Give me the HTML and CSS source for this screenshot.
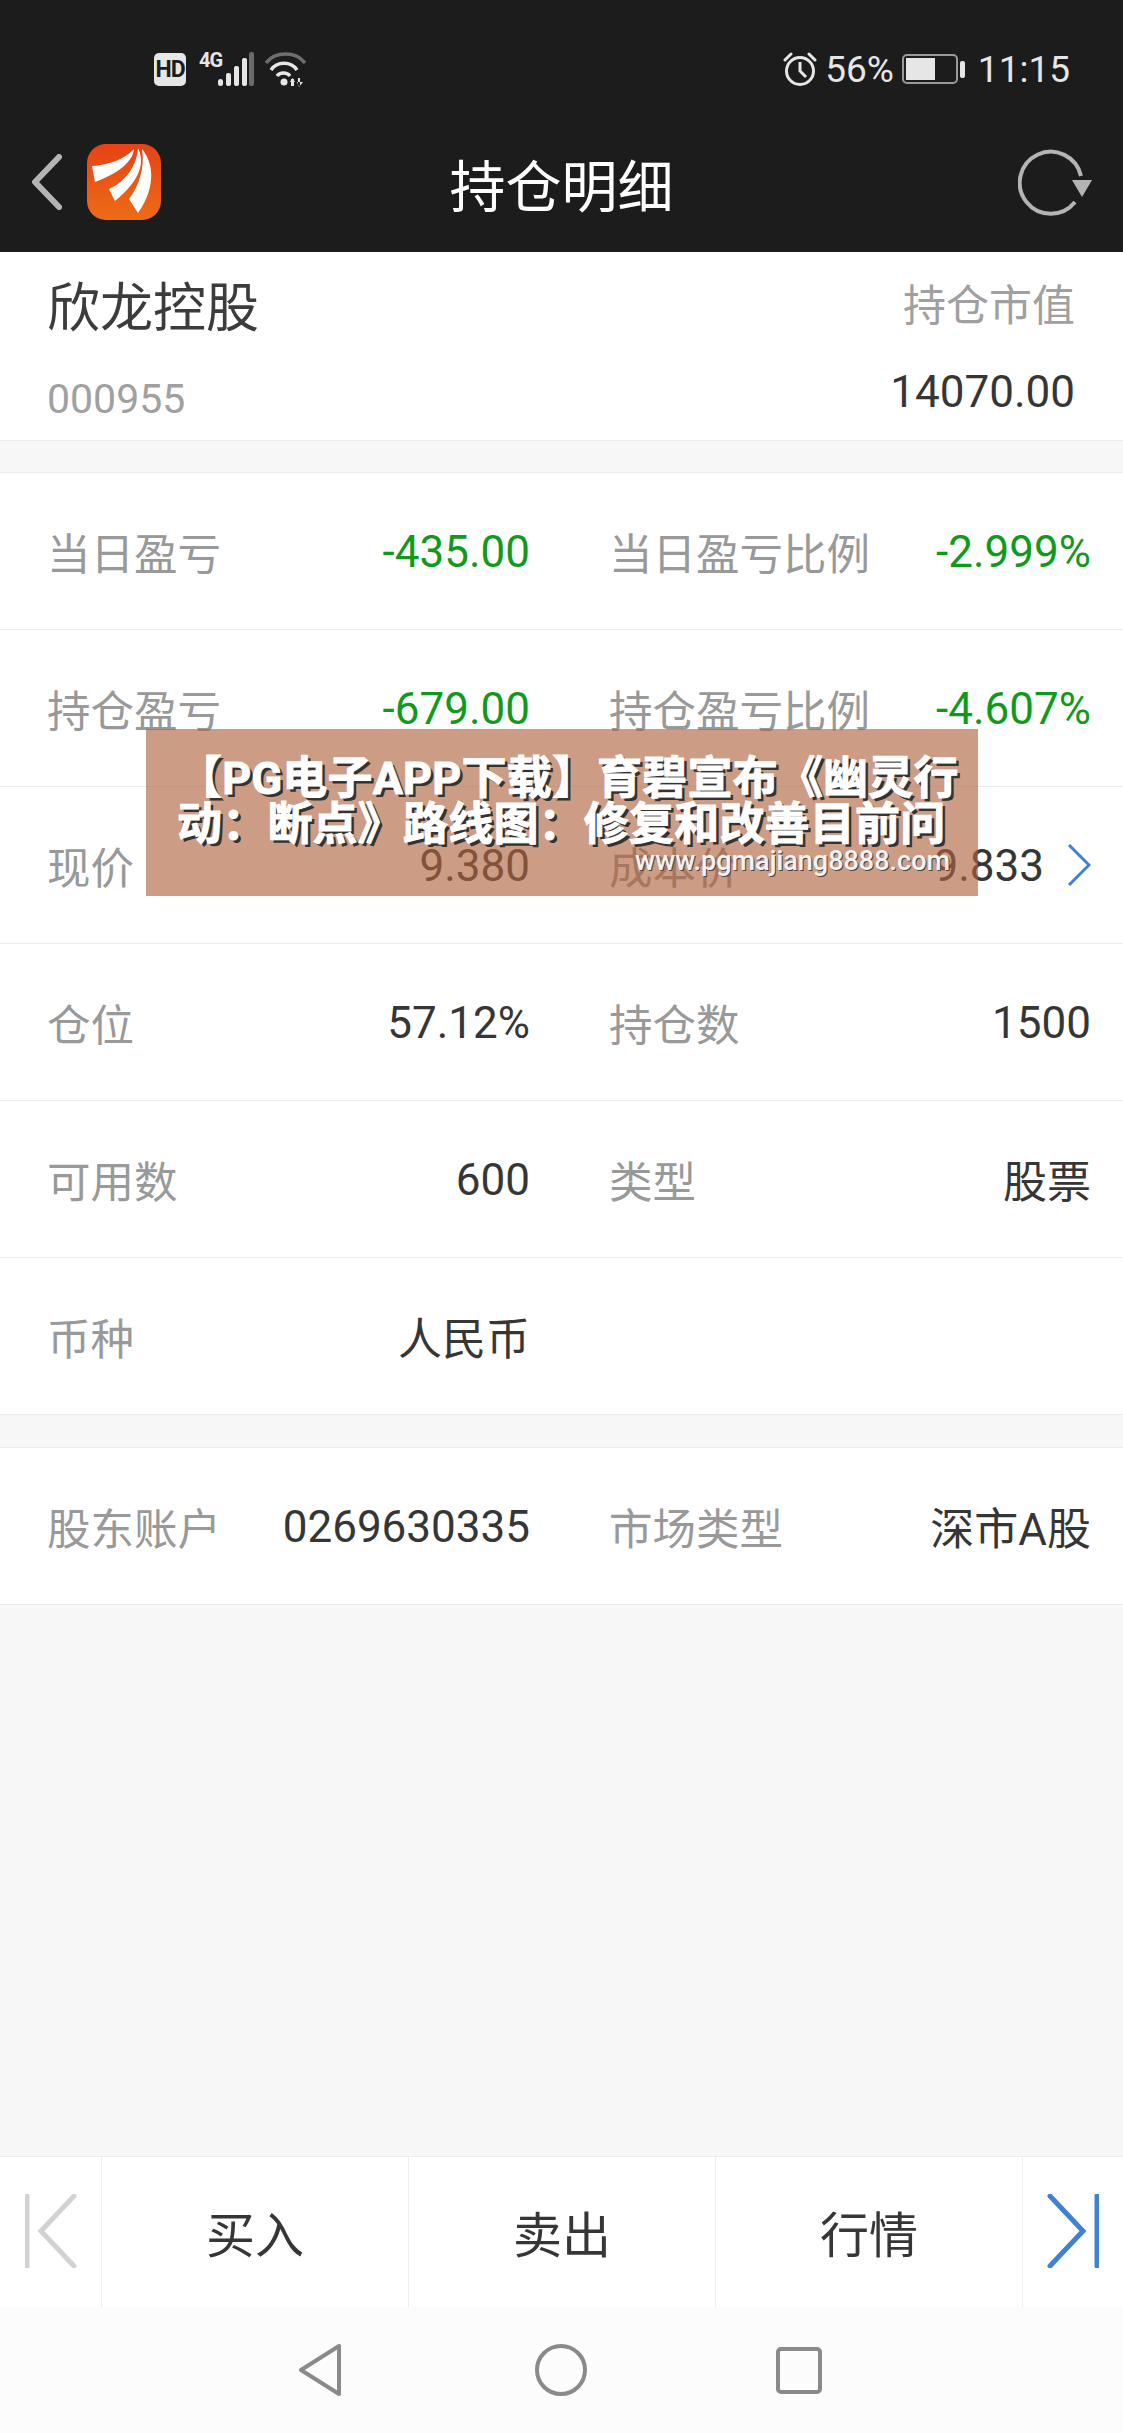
FILE: index.html
```html
<!DOCTYPE html>
<html lang="zh-CN">
<head>
    <meta charset="UTF-8">
    <meta name="viewport" content="width=device-width, initial-scale=1.0">
    <title>持仓明细</title>
    <link rel="stylesheet" href="styles.css">
</head>
<body>
<div class="page">
    <header class="top">
        <div class="status">
            <div class="status-left">
                <span class="hd">HD</span>
                <span class="net">4G</span>
                <svg class="signal" width="37" height="34" viewBox="0 0 37 34">
                    <rect x="0" y="27" width="5" height="7" rx="2.5" fill="#e6e6e6"/>
                    <rect x="8" y="21" width="5" height="13" rx="2" fill="#e6e6e6"/>
                    <rect x="16" y="14" width="5" height="20" rx="2" fill="#e6e6e6"/>
                    <rect x="24" y="6" width="5" height="28" rx="2" fill="#e6e6e6"/>
                    <rect x="31" y="0" width="5" height="34" rx="2" fill="#6a6a6a"/>
                </svg>
                <svg class="wifi" width="41" height="35" viewBox="0 0 41 35">
                    <path d="M1 11 C10 -1 31 -1 40 11" fill="none" stroke="#6e6e6e" stroke-width="3.5"/>
                    <path d="M6 18 C12 9 26 9 32 18" fill="none" stroke="#e6e6e6" stroke-width="3.5"/>
                    <path d="M12 24 C15 20 22 20 25 24" fill="none" stroke="#e6e6e6" stroke-width="3.5"/>
                    <circle cx="19" cy="30" r="3.5" fill="#e6e6e6"/>
                    <path d="M26 34 L26 27 L29 27 L29 34 Z M25 30 L27.500 26 L30 30 Z" fill="#e6e6e6"/>
                    <path d="M33 26 L33 34 L35 34 L35 26 Z M32 30 L38 30 L34 35 Z" fill="#e6e6e6"/>
                </svg>
            </div>
            <div class="status-right">
                <svg class="alarm" width="34" height="35" viewBox="0 0 34 35">
                    <circle cx="17" cy="19" r="13.500" fill="none" stroke="#e6e6e6" stroke-width="3"/>
                    <path d="M17 10 L17 19 L23 25" fill="none" stroke="#e6e6e6" stroke-width="3"/>
                    <path d="M2 8 L8 2 M26 2 L32 8" fill="none" stroke="#e6e6e6" stroke-width="3" stroke-linecap="round"/>
                </svg>
                <span class="pct">56%</span>
                <svg class="battery" width="64" height="30" viewBox="0 0 64 30">
                    <rect x="1" y="1" width="54" height="28" rx="4" fill="none" stroke="#9a9a9a" stroke-width="2"/>
                    <rect x="4" y="4" width="29" height="22" fill="#e6e6e6"/>
                    <rect x="58" y="7" width="5" height="17" rx="2" fill="#e6e6e6"/>
                </svg>
                <span class="time">11:15</span>
            </div>
        </div>
        <div class="titlebar">
            <div class="title-left">
                <svg class="back" width="31" height="56" viewBox="0 0 31 56">
                    <path d="M28 3 L4 28 L28 53" fill="none" stroke="#b4b4b4" stroke-width="6" stroke-linecap="round" stroke-linejoin="round"/>
                </svg>
                <svg class="logo" width="74" height="76" viewBox="0 0 74 76">
                    <defs>
                        <linearGradient id="logoFill" x1="0" y1="0" x2="0" y2="1">
                            <stop offset="0" stop-color="#e74215"/>
                            <stop offset="1" stop-color="#ec6c17"/>
                        </linearGradient>
                    </defs>
                    <rect width="74" height="76" rx="19" fill="url(#logoFill)"/>
                    <path d="M5 22 C22 21 38 15 47 5 C46 18 30 30 8 38 Z" fill="#fff"/>
                    <path d="M22 45 C38 38 50 22 51 4 C58 18 54 36 28 57 Z" fill="#fff"/>
                    <path d="M42 55 C52 42 58 24 55 5 C66 18 70 42 51 69 Z" fill="#fff"/>
                </svg>
            </div>
            <h1 class="title">持仓明细</h1>
            <div class="title-right">
                <svg class="refresh" width="74" height="68" viewBox="0 0 74 68">
                    <path d="M57 54 A31 31 0 1 1 63 28" fill="none" stroke="#b4b4b4" stroke-width="4"/>
                    <path d="M54 32 L74 32 L64 49 Z" fill="#b4b4b4"/>
                </svg>
            </div>
        </div>
    </header>

    <section class="stock">
        <div>
            <div class="stock-name">欣龙控股</div>
            <div class="stock-code">000955</div>
        </div>
        <div class="stock-right">
            <div class="stock-label">持仓市值</div>
            <div class="stock-value">14070.00</div>
        </div>
    </section>

    <section class="card">
        <div class="row">
            <div class="cell"><span class="label">当日盈亏</span><span class="value num green">-435.00</span></div>
            <div class="cell"><span class="label">当日盈亏比例</span><span class="value num green">-2.999%</span></div>
        </div>
        <div class="row">
            <div class="cell"><span class="label">持仓盈亏</span><span class="value num green">-679.00</span></div>
            <div class="cell"><span class="label">持仓盈亏比例</span><span class="value num green">-4.607%</span></div>
        </div>
        <div class="row">
            <div class="cell"><span class="label">现价</span><span class="value num">9.380</span></div>
            <div class="cell">
                <span class="label">成本价</span>
                <span class="value-link">
                    <span class="value num">9.833</span>
                    <svg class="more" width="24" height="42" viewBox="0 0 24 42">
                        <path d="M2 1 L22 21 L2 41" fill="none" stroke="#3f82d4" stroke-width="3"/>
                    </svg>
                </span>
            </div>
        </div>
        <div class="row">
            <div class="cell"><span class="label">仓位</span><span class="value num">57.12%</span></div>
            <div class="cell"><span class="label">持仓数</span><span class="value num">1500</span></div>
        </div>
        <div class="row">
            <div class="cell"><span class="label">可用数</span><span class="value num">600</span></div>
            <div class="cell"><span class="label">类型</span><span class="value">股票</span></div>
        </div>
        <div class="row">
            <div class="cell"><span class="label">币种</span><span class="value">人民币</span></div>
            <div class="cell"></div>
        </div>
    </section>

    <section class="card second">
        <div class="row">
            <div class="cell"><span class="label">股东账户</span><span class="value num">0269630335</span></div>
            <div class="cell"><span class="label">市场类型</span><span class="value">深市A股</span></div>
        </div>
    </section>

    <div class="spacer"></div>

    <nav class="actions">
        <div class="action">
            <svg width="52" height="74" viewBox="0 0 52 74">
                <path d="M2 2 L2 72" fill="none" stroke="#d2d2d2" stroke-width="5" stroke-linecap="round"/>
                <path d="M49 2 L16 37 L49 72" fill="none" stroke="#d2d2d2" stroke-width="5" stroke-linecap="round"/>
            </svg>
        </div>
        <div class="action">买入</div>
        <div class="action">卖出</div>
        <div class="action">行情</div>
        <div class="action">
            <svg width="52" height="74" viewBox="0 0 52 74">
                <path d="M3 2 L36 37 L3 72" fill="none" stroke="#3f82d4" stroke-width="5" stroke-linecap="round"/>
                <path d="M50 2 L50 72" fill="none" stroke="#3f82d4" stroke-width="5" stroke-linecap="round"/>
            </svg>
        </div>
    </nav>

    <footer class="sysnav">
        <svg width="44" height="52" viewBox="0 0 44 52">
            <path d="M41 2 L41 50 L3 26 Z" fill="none" stroke="#8a8a8a" stroke-width="4" stroke-linejoin="round"/>
        </svg>
        <svg width="52" height="52" viewBox="0 0 52 52">
            <circle cx="26" cy="26" r="24" fill="none" stroke="#8a8a8a" stroke-width="4"/>
        </svg>
        <svg class="nav-square" width="46" height="47" viewBox="0 0 46 47">
            <rect x="2" y="2" width="42" height="43" rx="3" fill="none" stroke="#8a8a8a" stroke-width="4"/>
        </svg>
    </footer>

    <div class="promo">
        <div class="promo-title">【PG电子APP下载】育碧宣布《幽灵行<br>动：断点》路线图：修复和改善目前问</div>
        <div class="promo-url">www.pgmajiang8888.com</div>
    </div>
</div>
</body>
</html>
```

FILE: styles.css
```css
body {
    margin: 0;
    font-family: Roboto, "Noto Sans CJK SC", sans-serif;
    background-color: #f7f7f7;
    color: #363636;
}
.page {
    position: relative;
    display: flex;
    flex-direction: column;
    width: 1123px;
    height: 2433px;
    overflow: hidden;
}

/* top */
.top {
    height: 252px;
    background-color: #1c1c1c;
    color: #e6e6e6;
}
.status {
    display: flex;
    justify-content: space-between;
    align-items: center;
    height: 36px;
    padding: 51px 53px 0 154px;
}
.status-left,
.status-right {
    display: flex;
    align-items: center;
}
.hd {
    width: 32px;
    height: 33px;
    line-height: 33px;
    text-align: center;
    background-color: #e6e6e6;
    color: #1c1c1c;
    border-radius: 5px;
    font-size: 23px;
    font-weight: 700;
    letter-spacing: -1px;
}
.net {
    width: 18px;
    margin: -18px 0 0 13px;
    font-size: 20px;
    font-weight: 700;
    letter-spacing: -1px;
}
.signal {
    margin-left: 1px;
}
.wifi {
    margin-left: 10px;
}
.pct {
    margin-left: 8px;
    font-size: 37px;
}
.battery {
    margin-left: 8px;
}
.time {
    margin-left: 12px;
    font-size: 37px;
}
.titlebar {
    display: grid;
    grid-template-columns: 1fr auto 1fr;
    align-items: center;
    height: 88px;
    margin-top: 51px;
    padding: 0 31px;
}
.title-left {
    display: flex;
    align-items: center;
    gap: 25px;
}
.title-right {
    display: flex;
    justify-content: flex-end;
}
.title {
    margin: 0;
    font-size: 56px;
    font-weight: 400;
    color: #fff;
}

/* stock head */
.stock {
    display: flex;
    justify-content: space-between;
    height: 188px;
    padding: 0 48px 0 47px;
    background-color: #fff;
    border-bottom: 1px solid #ececec;
}
.stock-name {
    margin-top: 22px;
    height: 70px;
    line-height: 70px;
    font-size: 53px;
    color: #3c3c3c;
}
.stock-code {
    margin-top: 30px;
    line-height: 50px;
    font-size: 41px;
    color: #a0a0a0;
}
.stock-right {
    text-align: right;
}
.stock-label {
    margin-top: 22px;
    height: 64px;
    line-height: 64px;
    font-size: 43px;
    color: #a0a0a0;
}
.stock-value {
    margin-top: 29px;
    line-height: 50px;
    font-size: 44px;
}

/* rows */
.card {
    margin-top: 31px;
    background-color: #fff;
    border-top: 1px solid #ececec;
}
.card.second {
    margin-top: 32px;
}
.row {
    display: grid;
    grid-template-columns: 483px 482px;
    column-gap: 79px;
    align-items: center;
    box-sizing: border-box;
    height: 157px;
    padding: 0 32px 0 47px;
    border-bottom: 1px solid #ececec;
}
.cell {
    display: flex;
    justify-content: space-between;
    align-items: center;
}
.label {
    font-size: 43.5px;
    color: #999;
}
.value {
    font-size: 44px;
    color: #363636;
}
.num {
    padding-top: 2px;
}
.green {
    color: #109a1c;
}
.value-link {
    display: flex;
    align-items: center;
    gap: 23px;
}

/* bottom */
.spacer {
    flex: 1;
}
.actions {
    display: grid;
    grid-template-columns: 101px 307px 307px 307px 1fr;
    height: 151px;
    background-color: #fff;
    border-top: 1px solid #ececec;
    box-sizing: border-box;
}
.action {
    display: flex;
    justify-content: center;
    align-items: center;
    padding-bottom: 2px;
    font-size: 49px;
    border-left: 1px solid #eee;
}
.action:first-child {
    border-left: none;
}
.sysnav {
    display: grid;
    grid-template-columns: 44px 52px 46px;
    column-gap: 193px;
    justify-content: center;
    align-items: center;
    height: 126px;
    background-color: #fcfcfc;
}
.nav-square {
    margin-left: -4px;
}

/* promo strip over the rows */
.promo {
    position: absolute;
    left: 146px;
    top: 729px;
    width: 832px;
    height: 167px;
    padding: 27px 28px 0 31px;
    box-sizing: border-box;
    background-color: rgba(174, 98, 60, 0.63);
}
.promo-title {
    font-size: 45px;
    line-height: 46px;
    font-weight: 700;
    letter-spacing: 0.2px;
    white-space: nowrap;
    color: #fff;
    -webkit-text-stroke: 1px #fff;
    text-shadow: 3px 3px 0 #333;
}
.promo-url {
    line-height: 27px;
    text-align: right;
    font-size: 27px;
    font-weight: 500;
    color: #f2f2f2;
    text-shadow: 1px 1px 0 #444;
}
```
